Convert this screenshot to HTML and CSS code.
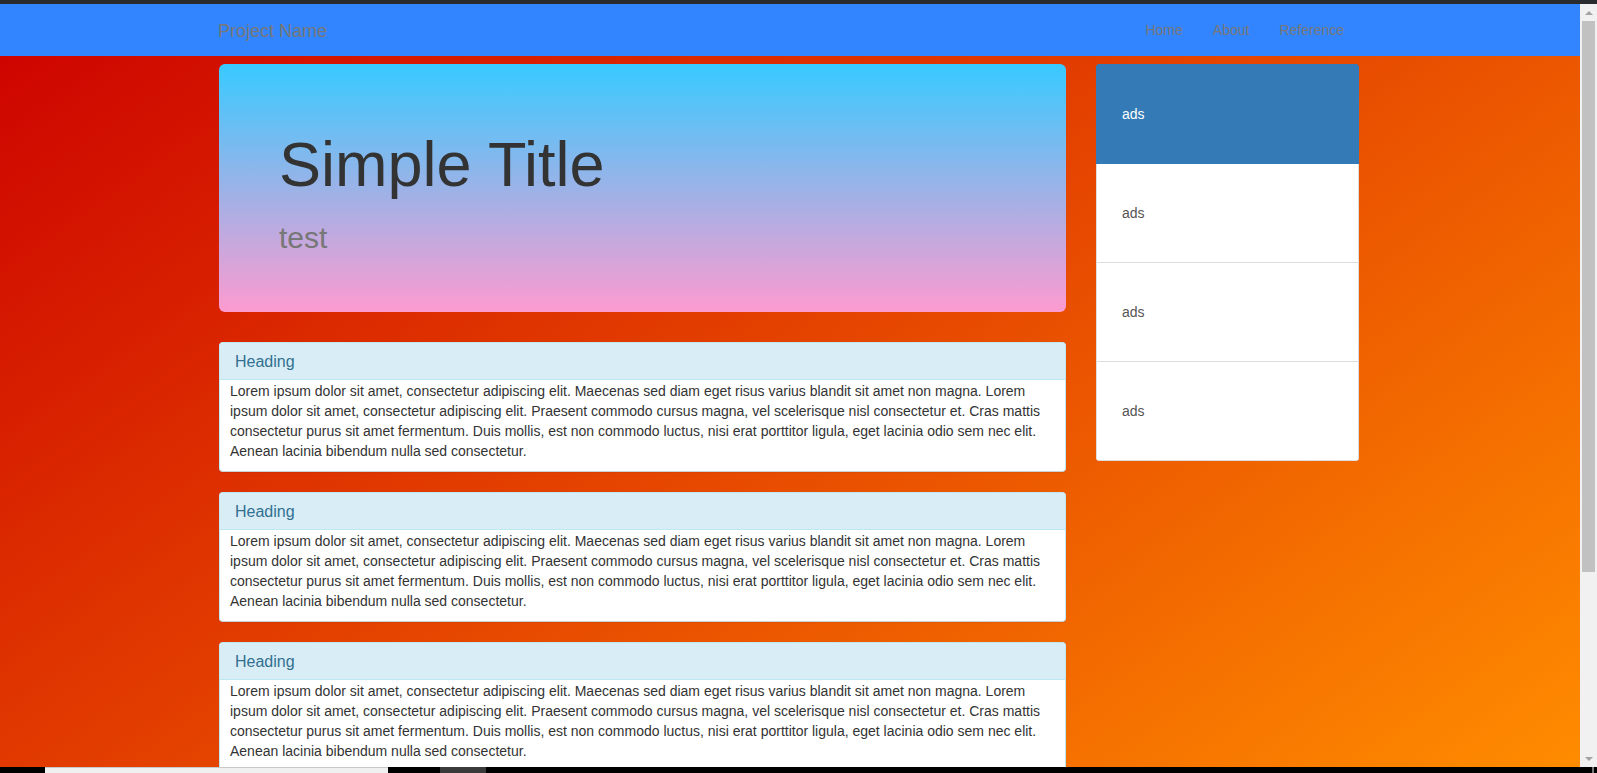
FILE: index.html
```html
<!DOCTYPE html>
<html lang="en">
<head>
<meta charset="utf-8">
<title>Project Name</title>
<link rel="stylesheet" href="styles.css">
</head>
<body>
<div class="topstrip"></div>
<div class="window">
  <div class="viewport">
    <nav class="navbar">
      <div class="nav-inner">
        <a class="brand" href="#">Project Name</a>
        <ul class="nav-links">
          <li><a href="#">Home</a></li>
          <li><a href="#">About</a></li>
          <li><a href="#">Reference</a></li>
        </ul>
      </div>
    </nav>
    <div class="container">
      <main class="main-col">
        <div class="jumbotron">
          <h1>Simple Title</h1>
          <h2>test</h2>
        </div>
        <div class="panel">
          <div class="panel-heading">Heading</div>
          <div class="panel-body">Lorem ipsum dolor sit amet, consectetur adipiscing elit. Maecenas sed diam eget risus varius blandit sit amet non magna. Lorem ipsum dolor sit amet, consectetur adipiscing elit. Praesent commodo cursus magna, vel scelerisque nisl consectetur et. Cras mattis consectetur purus sit amet fermentum. Duis mollis, est non commodo luctus, nisi erat porttitor ligula, eget lacinia odio sem nec elit. Aenean lacinia bibendum nulla sed consectetur.</div>
        </div>
        <div class="panel">
          <div class="panel-heading">Heading</div>
          <div class="panel-body">Lorem ipsum dolor sit amet, consectetur adipiscing elit. Maecenas sed diam eget risus varius blandit sit amet non magna. Lorem ipsum dolor sit amet, consectetur adipiscing elit. Praesent commodo cursus magna, vel scelerisque nisl consectetur et. Cras mattis consectetur purus sit amet fermentum. Duis mollis, est non commodo luctus, nisi erat porttitor ligula, eget lacinia odio sem nec elit. Aenean lacinia bibendum nulla sed consectetur.</div>
        </div>
        <div class="panel">
          <div class="panel-heading">Heading</div>
          <div class="panel-body">Lorem ipsum dolor sit amet, consectetur adipiscing elit. Maecenas sed diam eget risus varius blandit sit amet non magna. Lorem ipsum dolor sit amet, consectetur adipiscing elit. Praesent commodo cursus magna, vel scelerisque nisl consectetur et. Cras mattis consectetur purus sit amet fermentum. Duis mollis, est non commodo luctus, nisi erat porttitor ligula, eget lacinia odio sem nec elit. Aenean lacinia bibendum nulla sed consectetur.</div>
        </div>
      </main>
      <aside class="side-col">
        <div class="list-group">
          <a class="list-item active" href="#">ads</a>
          <a class="list-item" href="#">ads</a>
          <a class="list-item" href="#">ads</a>
          <a class="list-item" href="#">ads</a>
        </div>
      </aside>
    </div>
  </div>
  <div class="scrollbar">
    <div class="sb-btn"><span class="tri-up"></span></div>
    <div class="sb-thumb"></div>
    <div class="sb-track"></div>
    <div class="sb-btn"><span class="tri-down"></span></div>
  </div>
</div>
<div class="taskbar">
  <span class="tb-black tb-a"></span>
  <span class="tb-light"></span>
  <span class="tb-black tb-b"></span>
  <span class="tb-gray"></span>
  <span class="tb-black tb-fill"></span>
  <span class="tb-tick"></span>
  <span class="tb-black tb-end"></span>
</div>
</body>
</html>
```

FILE: styles.css
```css
* { box-sizing: border-box; }

html, body {
  margin: 0;
  padding: 0;
  width: 1597px;
  height: 773px;
  overflow: hidden;
  font-family: "Liberation Sans", Arial, sans-serif;
  font-size: 14px;
  line-height: 20px;
  color: #333;
}

a { text-decoration: none; color: inherit; }

.topstrip {
  height: 4px;
  background: #2a2b2e;
}

.window {
  display: flex;
  height: 763px;
}

.viewport {
  flex: 1;
  overflow: hidden;
  background: linear-gradient(145deg, #cc0000 0%, #ff8c00 100%);
}

/* navbar */
.navbar {
  height: 52px;
  background: #3385ff;
}
.nav-inner {
  width: 1140px;
  margin-left: 219px;
  height: 100%;
  display: flex;
  align-items: center;
  justify-content: space-between;
}
.brand {
  margin-left: -1px;
  font-size: 18px;
  line-height: 20px;
  color: #777;
  padding-top: 1px;
}
.nav-links {
  list-style: none;
  margin: 0;
  padding: 0;
  display: flex;
}
.nav-links a {
  display: block;
  padding: 0 15px;
  line-height: 20px;
  color: #777;
}

/* layout */
.container {
  width: 1140px;
  margin-left: 219px;
  padding-top: 8px;
  display: flex;
  align-items: flex-start;
  gap: 30px;
}
.main-col { width: 847px; flex: none; }
.side-col { width: 263px; flex: none; }

/* jumbotron */
.jumbotron {
  height: 248px;
  padding: 66px 60px 0;
  margin-bottom: 30px;
  border-radius: 6px;
  background: linear-gradient(to bottom, #38caff 0%, #fd9bd0 100%);
}
.jumbotron h1 {
  margin: 0 0 22px;
  font-size: 63px;
  line-height: 69px;
  font-weight: 400;
  color: #333;
}
.jumbotron h2 {
  margin: 0;
  font-size: 30px;
  line-height: 33px;
  font-weight: 400;
  color: #777;
}

/* panels */
.panel {
  background: #fff;
  border: 1px solid #bce8f1;
  border-bottom-color: #c9d3d6;
  border-radius: 4px;
  margin-bottom: 20px;
  box-shadow: 0 1px 1px rgba(0,0,0,.05);
  overflow: hidden;
}
.panel-heading {
  background: #d9edf7;
  color: #31708f;
  font-size: 16px;
  line-height: 20px;
  padding: 9px 15px 7px;
  border-bottom: 1px solid #bce8f1;
}
.panel-body {
  padding: 1px 10px 10px;
  line-height: 20px;
}

/* list group */
.list-group {
  border-radius: 4px;
  overflow: hidden;
  display: flex;
  flex-direction: column;
}
.list-item {
  display: block;
  padding: 39px 25px;
  line-height: 20px;
  color: #555;
  background: #fff;
  border: 1px solid #ddd;
  margin-bottom: -1px;
}
.list-item:last-child { margin-bottom: 0; }
.list-item.active {
  background: #337ab7;
  border-color: #337ab7;
  color: #fff;
  position: relative;
}

/* scrollbar */
.scrollbar {
  width: 17px;
  flex: none;
  background: #f1f1f1;
  display: flex;
  flex-direction: column;
}
.sb-btn {
  height: 17px;
  display: flex;
  align-items: center;
  justify-content: center;
  flex: none;
}
.tri-up, .tri-down {
  width: 0;
  height: 0;
  border-left: 4px solid transparent;
  border-right: 4px solid transparent;
}
.tri-up { border-bottom: 4px solid #a3a3a3; }
.tri-down { border-top: 4px solid #a3a3a3; }
.sb-thumb {
  height: 551px;
  margin: 0 2px;
  background: #c1c1c1;
  flex: none;
}
.sb-track { flex: 1; }

/* taskbar strip */
.taskbar {
  height: 6px;
  display: flex;
  background: #000;
}
.taskbar span { display: block; height: 100%; flex: none; }
.tb-black { background: #000; }
.tb-a { width: 45px; }
.tb-light { width: 343px; background: #f0f0f0; border-top: 1px solid #c8c8c8; }
.tb-b { width: 52px; }
.tb-gray { width: 46px; background: #3a3a3a; }
.tb-fill { flex: 1 !important; }
.tb-tick { width: 2px; background: #777; }
.tb-end { width: 3px; }
```
